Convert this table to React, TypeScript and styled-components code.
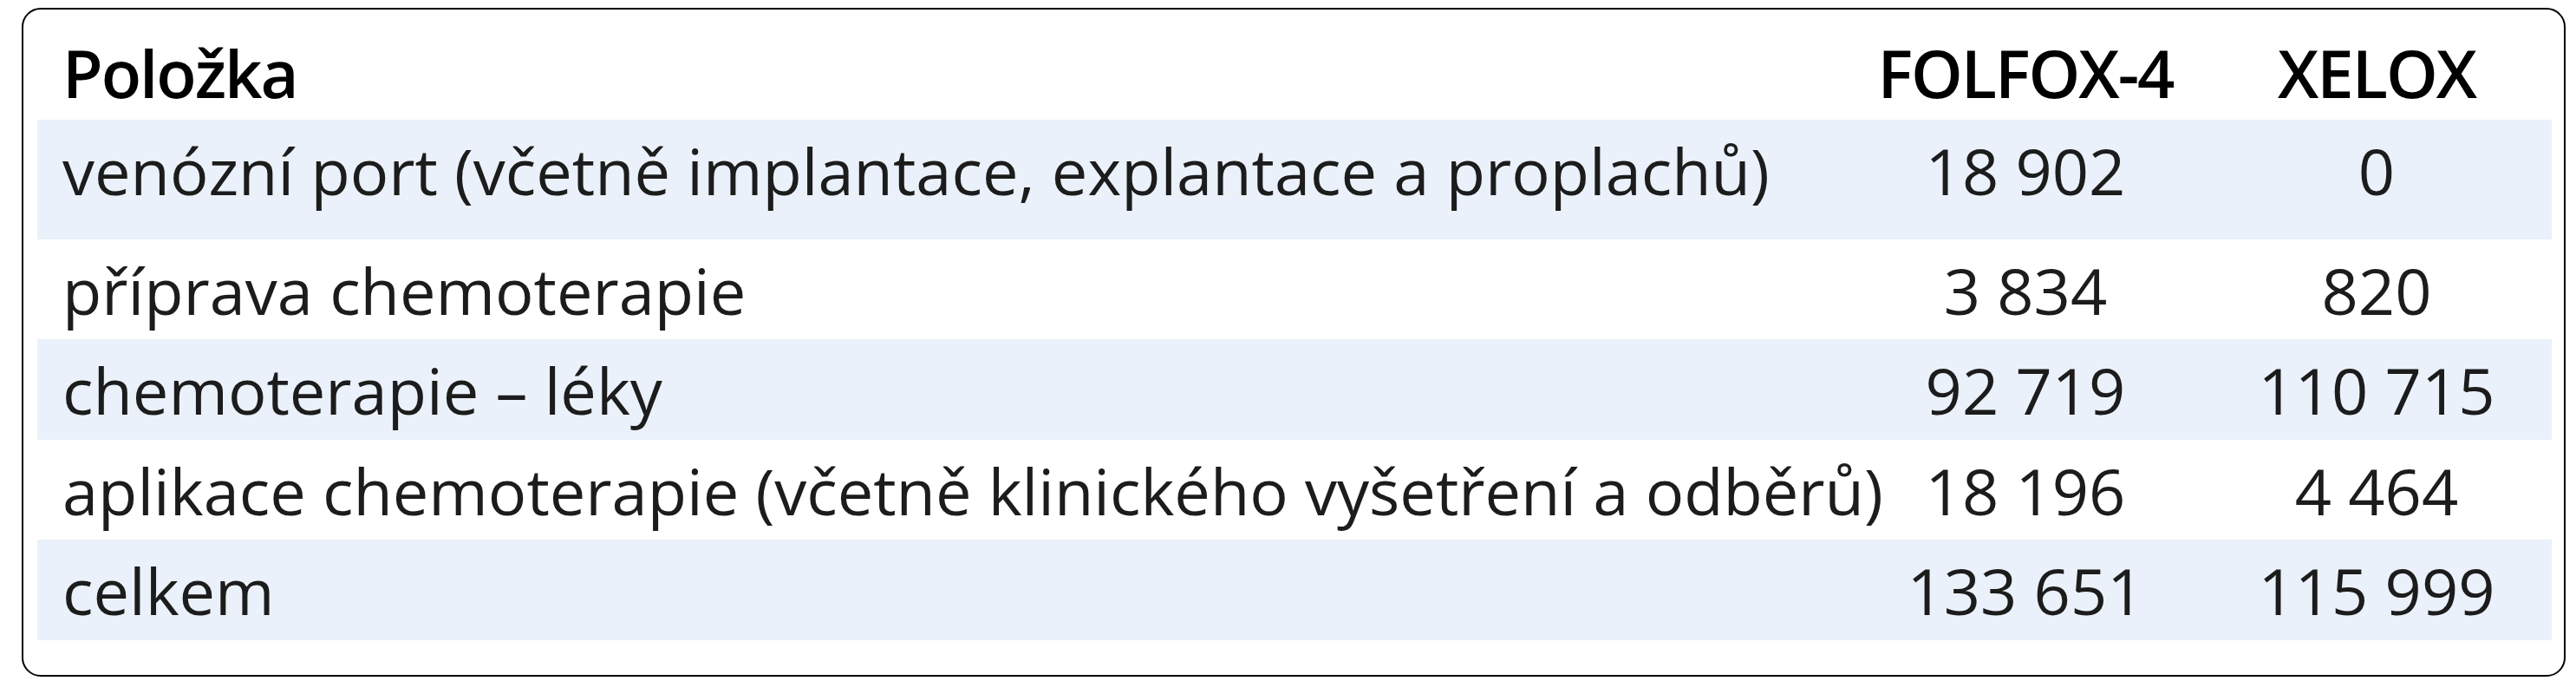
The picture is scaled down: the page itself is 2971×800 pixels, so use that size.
import React from "react";
import styled, { createGlobalStyle } from "styled-components";

// costs per regimen (CZK)
const rows = [
  { item: "venózní port (včetně implantace, explantace a proplachů)", folfox: "18 902", xelox: "0" },
  { item: "příprava chemoterapie", folfox: "3 834", xelox: "820" },
  { item: "chemoterapie – léky", folfox: "92 719", xelox: "110 715" },
  { item: "aplikace chemoterapie (včetně klinického vyšetření a odběrů)", folfox: "18 196", xelox: "4 464" },
  { item: "celkem", folfox: "133 651", xelox: "115 999" },
];

const GlobalStyle = createGlobalStyle`
  html, body {
    margin: 0;
    padding: 0;
    background: #ffffff;
  }
  body {
    font-family: "Open Sans", "Noto Sans", "Liberation Sans", sans-serif;
    color: #1c1c1c;
  }
`;

const Page = styled.div`
  padding: 9px 0 0 25px;
`;

const Frame = styled.div`
  box-sizing: border-box;
  width: 2934px;
  border: 2px solid #000000;
  border-radius: 22px;
  padding: 0 14px 40px 16px;
  background: #ffffff;
`;

const Row = styled.div<{ $shaded?: boolean; $extra?: number }>`
  display: grid;
  grid-template-columns: minmax(0, 1fr) 406px 404px;
  background: ${(p) => (p.$shaded ? "#eaf1fa" : "transparent")};
  padding: 3px 0 ${(p) => p.$extra ?? 0}px;
  font-size: 74px;
  line-height: 112.5px;
  white-space: nowrap;
`;

const HeaderRow = styled(Row)`
  padding: 21px 0 3px;
  font-size: 76px;
  font-weight: 600;
  line-height: 103px;
  letter-spacing: -2px;
  color: #000000;
`;

const ItemCell = styled.div`
  padding-left: 29px;
`;

const ValueCell = styled.div`
  text-align: center;
`;

export default function App() {
  return (
    <>
      <GlobalStyle />
      <Page>
        <Frame>
          <HeaderRow>
            <ItemCell>Položka</ItemCell>
            <ValueCell>FOLFOX-4</ValueCell>
            <ValueCell>XELOX</ValueCell>
          </HeaderRow>
          {rows.map((r, i) => (
            <Row key={r.item} $shaded={i % 2 === 0} $extra={i === 0 ? 22 : 0}>
              <ItemCell>{r.item}</ItemCell>
              <ValueCell>{r.folfox}</ValueCell>
              <ValueCell>{r.xelox}</ValueCell>
            </Row>
          ))}
        </Frame>
      </Page>
    </>
  );
}
